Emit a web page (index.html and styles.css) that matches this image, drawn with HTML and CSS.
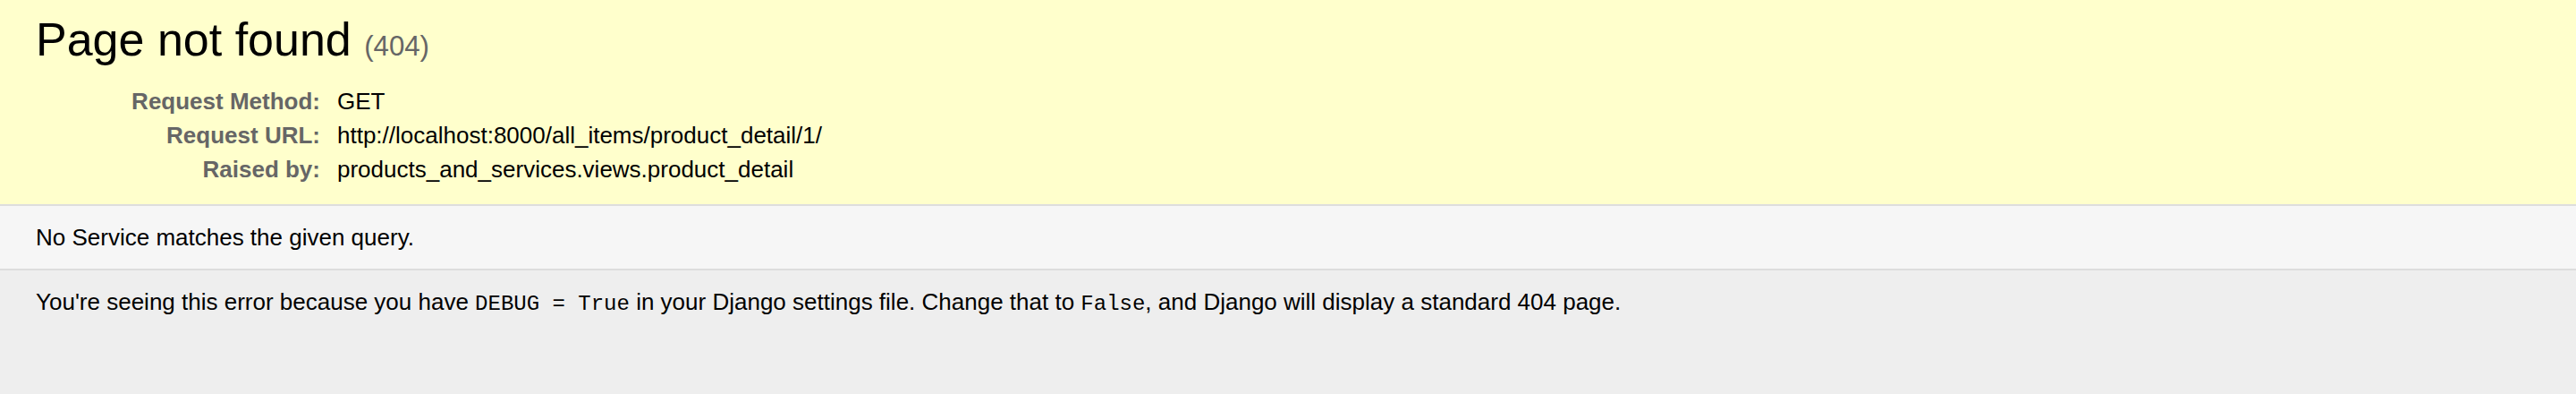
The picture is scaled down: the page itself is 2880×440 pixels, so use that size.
FILE: index.html
```html
<!DOCTYPE html>
<html lang="en">
<head>
<meta charset="utf-8">
<title>Page not found at /all_items/product_detail/1/</title>
<link rel="stylesheet" href="styles.css">
</head>
<body class="page">
  <header class="summary">
    <h1 class="title">Page not found <small class="status">(404)</small></h1>
    <table class="meta">
      <tr>
        <th class="meta-key">Request Method:</th>
        <td class="meta-val">GET</td>
      </tr>
      <tr>
        <th class="meta-key">Request URL:</th>
        <td class="meta-val">http://localhost:8000/all_items/product_detail/1/</td>
      </tr>
      <tr>
        <th class="meta-key">Raised by:</th>
        <td class="meta-val">products_and_services.views.product_detail</td>
      </tr>
    </table>
  </header>
  <main class="info">
    <p class="info-text">No Service matches the given query.</p>
  </main>
  <footer class="explanation">
    <p class="explain-text">You're seeing this error because you have <code class="code">DEBUG = True</code> in your Django settings file. Change that to <code class="code">False</code>, and Django will display a standard 404 page.</p>
  </footer>
</body>
</html>
```

FILE: styles.css
```css
html, body, h1, p, table, th, td, small, code, header, main, footer {
  margin: 0;
  padding: 0;
}
html {
  background: #eee;
}
.page {
  font-family: "Liberation Sans", Arial, Helvetica, sans-serif;
  font-size: 26px;
  line-height: 30px;
  background: #eee;
  color: #000;
  min-height: 440px;
}
.summary,
.info,
.explanation {
  padding: 20px 40px;
  border-bottom: 2px solid #ddd;
}
.summary {
  background: #ffc;
}
.info {
  background: #f6f6f6;
}
.explanation {
  background: #eee;
  border-bottom: none;
}
.title {
  font-size: 52px;
  line-height: 48px;
  font-weight: normal;
  margin-bottom: 26px;
}
.status {
  font-size: 60%;
  line-height: 1;
  color: #666;
  font-weight: normal;
}
.meta {
  border: none;
  border-collapse: collapse;
  width: 100%;
}
.meta-key,
.meta-val {
  vertical-align: top;
  padding: 4px 6px;
  line-height: 30px;
}
.meta-key {
  width: 312px;
  text-align: right;
  color: #666;
  font-weight: bold;
  padding-right: 13px;
}
.meta-val {
  text-align: left;
}
.code {
  font-family: "Liberation Mono", "Courier New", monospace;
  font-size: 24px;
}
```
